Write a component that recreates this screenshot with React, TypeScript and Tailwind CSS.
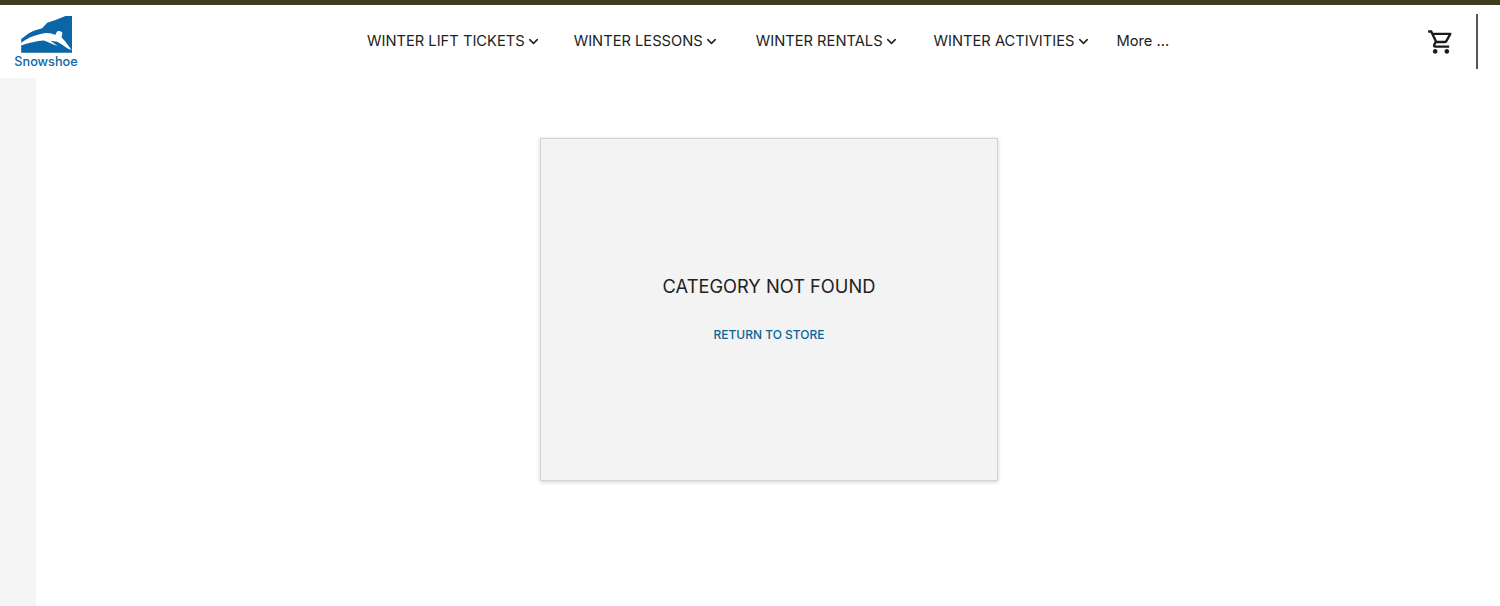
import React from "react";
import { ChevronDown } from "lucide-react";

const navItems = [
  { label: "WINTER LIFT TICKETS", className: "ml-[288px]" },
  { label: "WINTER LESSONS", className: "ml-[33px]" },
  { label: "WINTER RENTALS", className: "ml-[37px]" },
  { label: "WINTER ACTIVITIES", className: "ml-[35px]" },
];

function Logo() {
  return (
    <div className="w-[79px] h-[73px] flex flex-col items-center pt-[11px] pl-[14px] shrink-0">
      <svg width="54" height="38" viewBox="0 0 54 38" className="block shrink-0">
        <path
          d="M1.200 36.700V23L8.800 17.300L13.800 14.700L22.200 12.300L27.200 6.700L35.500 4L45.500 0H52V36.700Z"
          fill="#0b66a8"
        />
        <path
          d="M1.200 26.700C5 24 9 21.500 13.800 20C18 18.500 23 17 27.200 17C30 17 33 18 35.500 18.800C36 17 37 15.500 37.800 15C39.500 15 41 15.500 42.200 16.300C42.500 18 42 20 41.500 21.300C43 23 44.500 24.500 45.500 25.700C47.500 28.500 50 31.500 51.500 34C50 33.500 48.500 33 47.200 32.300C44 30 40.500 27.500 37.200 25.700C35 25.500 32.500 25 30.500 24.700C33 26.500 35.500 28.500 37.800 30C33 28.500 28 26 23.800 24.500C20 24.800 17 25.200 13.800 26C9 27 5 28 1.200 29.500Z"
          fill="#ffffff"
        />
      </svg>
      <span className="text-[12.700px] leading-[14px] font-medium text-[#0b66a8] mt-[1px] -ml-[1px] whitespace-nowrap">
        Snowshoe
      </span>
    </div>
  );
}

export default function App() {
  return (
    <div className="h-[606px] overflow-hidden bg-white font-['Inter',sans-serif] text-[#222222] flex flex-col">
      <div className="h-[5px] bg-[#403c1f] shrink-0" />
      <header className="h-[73px] flex items-center shrink-0">
        <Logo />
        <nav className="flex items-center text-[14.700px] h-[73px] pb-[1px]">
          {navItems.map((item) => (
            <a key={item.label} className={`flex items-center whitespace-nowrap ${item.className}`}>
              {item.label}
              <ChevronDown size={15} strokeWidth={2.4} className="ml-[1px] mt-[1px]" />
            </a>
          ))}
          <a className="ml-[26px] whitespace-nowrap">More ...</a>
        </nav>
        <div className="ml-auto flex items-center">
          <svg width="28" height="28" viewBox="0 0 24 24" fill="#1a1a1a" className="mr-[21px]">
            <path d="M15.55 13c.75 0 1.41-.41 1.75-1.03l3.58-6.490A1 1 0 0 0 20.010 4H5.210l-.94-2H1v2h2l3.600 7.590-1.350 2.440C4.520 15.370 5.480 17 7 17h12v-2H7l1.100-2h7.450zM6.160 6h12.150l-2.760 5H8.530L6.160 6zM7 18c-1.100 0-1.990.9-1.990 2S5.900 22 7 22s2-.9 2-2-.9-2-2-2zm10 0c-1.100 0-1.990.9-1.990 2s.89 2 1.990 2 2-.9 2-2-.9-2-2-2z" />
          </svg>
          <div className="w-[2px] h-[55px] bg-[#555555] mr-[22px]" />
        </div>
      </header>
      <div className="flex flex-1">
        <aside className="w-[36px] bg-[#f5f5f5] shrink-0" />
        <main className="flex-1 pt-[60px] pl-[504px]">
          <div className="w-[458px] h-[343px] bg-[#f3f3f3] border border-[#d4d4d4] shadow-[0_1px_4px_rgba(0,0,0,0.2)] flex flex-col items-center pt-[134px]">
            <h1 className="text-[18.300px] leading-[26px]">CATEGORY NOT FOUND</h1>
            <a className="mt-[28px] text-[12px] leading-[16px] font-medium text-[#0b6396]">RETURN TO STORE</a>
          </div>
        </main>
      </div>
    </div>
  );
}
